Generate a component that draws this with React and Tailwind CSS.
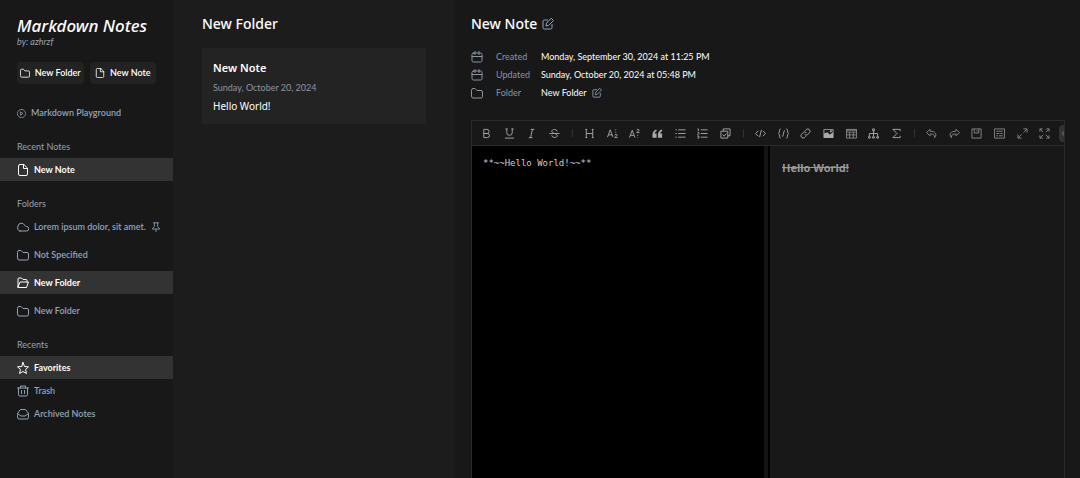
import React, { useState } from 'react';

const TOOLS = [
  { name: 'Bold', d: 'M6 3h7a4 4 0 0 1 0 9H6zM6 12h8a4 4 0 0 1 0 9H6z' },
  { name: 'Underline', d: 'M6 2v8a6 6 0 0 0 12 0V2M3 2h5M16 2h5M2 22h20' },
  { name: 'Italic', d: 'M10 3h8M6 21h8M14 3l-4 18' },
  { name: 'Strikethrough', d: 'M18 8c0-6-12-6-12-1 0 3 3 4 6 5s6 2 6 5c0 5-12 5-12-1M1 12h22' },
  null,
  { name: 'Title', d: 'M5 3v18M19 3v18M5 12h14M3 3h4M17 3h4M3 21h4M17 21h4' },
  { name: 'Subscript', d: 'M1 20 7 4l6 16M3 15h8M19 3v2M19 8v2M17 16c0-3 5-3 5 0l-5 5h6' },
  { name: 'Superscript', d: 'M1 21 7 5l6 16M3 16h8M17 5c0-3 5-3 5 0l-5 5h6M19 15v2M19 20v1' },
  { name: 'Quote', fill: true, d: 'M10 3C5 4 1 8 1 14v7h9v-9H6c0-3 2-4 4-5zM22 3c-5 1-9 5-9 11v7h9v-9h-4c0-3 2-4 4-5z' },
  { name: 'Unordered list', d: 'M7 4h16M7 12h16M7 20h16M1 4h3M1 12h3M1 20h3' },
  { name: 'Ordered list', d: 'M8 4h15M8 12h15M8 20h15M1 2h2v5M1 10h3v2l-3 3h3M1 18h3v4H1' },
  { name: 'Task list', d: 'M2 7h15v15H2zM7 7V2h15v15h-5M6 14l3 4 5-6' },
  null,
  { name: 'Inline code', d: 'M7 6l-6 6 6 6M17 6l6 6-6 6M14 4l-4 16' },
  { name: 'Block code', d: 'M6 2C1 2 5 9 2 11l-1 1 1 1c3 2-1 9 4 9M18 2c5 0 1 7 4 9l1 1-1 1c-3 2 1 9-4 9M14 5l-4 14' },
  { name: 'Link', d: 'M10 14a5 5 0 0 0 7 0l4-4a5 5 0 0 0-7-7l-3 3M14 10a5 5 0 0 0-7 0l-4 4a5 5 0 0 0 7 7l3-3' },
  { name: 'Image', fill: true, d: 'M3 2h18a2 2 0 0 1 2 2v16a2 2 0 0 1-2 2H3a2 2 0 0 1-2-2V4a2 2 0 0 1 2-2zM3 4v8l6-3 6 5 6-4V4zM15 5h4v4h-4z' },
  { name: 'Table', thin: true, d: 'M1 3h22v19H1zM1 5h22M1 9h22M1 15h22M8 9v13M16 9v13' },
  { name: 'Mermaid', d: 'M10 2h4v4h-4zM12 6v12M3 18v-6h18v6M1 19h4v3H1zM10 19h4v3h-4zM19 19h4v3h-4z' },
  { name: 'Formula', d: 'M20 7V3H4l9 9-9 9h16v-4' },
  null,
  { name: 'Undo', dim: true, d: 'M9 3 1 10l8 7v-4c7 0 10 2 10 8 6-8 1-14-10-14z' },
  { name: 'Redo', dim: true, d: 'M15 3l8 7-8 7v-4c-7 0-10 2-10 8C-1 13 4 7 15 7z' },
  { name: 'Save', dim: true, d: 'M2 2h20v20H2zM7 2v9h10V2M13 5v3' },
  { name: 'Prettier', dim: true, d: 'M1 2h22v20H1zM5 7h14M5 12h7M14 12h5M5 17h4M11 17h8' },
  { name: 'Fullscreen in page', dim: true, d: 'M14 2h8v8M22 2l-8 8M10 22H2v-8M2 22l8-8' },
  { name: 'Fullscreen', dim: true, d: 'M2 8V2h6M2 2l7 7M16 2h6v6M22 2l-7 7M2 16v6h6M2 22l7-7M22 16v6h-6M22 22l-7-7' },
  { name: 'Preview', dim: true, active: true, d: 'M1 12s4-8 11-8 11 8 11 8-4 8-11 8S1 12 1 12zM12 9a3 3 0 1 0 0 6 3 3 0 0 0 0-6z' },
];

const ICONS = {
  folder: 'M1 6a3 3 0 0 1 3-3h4l4 4h8a3 3 0 0 1 3 3v9a3 3 0 0 1-3 3H4a3 3 0 0 1-3-3z',
  folderOpen: 'M2 20V4a2 2 0 0 1 2-2h5l3 3h6a2 2 0 0 1 2 2v3M2 20l4-10h17l-4 11H3a1 1 0 0 1-1-1z',
  file: 'M13 1H6a3 3 0 0 0-3 3v16a3 3 0 0 0 3 3h12a3 3 0 0 0 3-3V9zM13 1v8h8',
  play: 'M12 1a11 11 0 1 0 0 22 11 11 0 0 0 0-22zM10 8l6 4-6 4z',
  cloud: 'M6 20h13a4.500 4.500 0 0 0 0-9c-2 0-3-1-4-3a7 7 0 0 0-13 2c-2 5 0 10 4 10z',
  pin: 'M6 2h12M8 2v9l-5 6h18l-5-6V2M12 17v6',
  star: 'M12 1l3 8 8 .6-6 5.400 2 8-7-4-7 4 2-8-6-5.400L9 9z',
  trash: 'M1 6h22M7 6V2h10v4M3 6v13a3 3 0 0 0 3 3h12a3 3 0 0 0 3-3V6M9 11v6M15 11v6',
  archive: 'M1 11l5-7a3 3 0 0 1 2-1h8a3 3 0 0 1 2 1l5 7v8a3 3 0 0 1-3 3H4a3 3 0 0 1-3-3zM1 11l7 5h8l7-5',
  calendar: 'M5 4h14a3 3 0 0 1 3 3v12a3 3 0 0 1-3 3H5a3 3 0 0 1-3-3V7a3 3 0 0 1 3-3zM2 11h20M8 1v6M16 1v6',
  edit: 'M11 4H5a3 3 0 0 0-3 3v12a3 3 0 0 0 3 3h12a3 3 0 0 0 3-3v-6M19 1l4 4-10 10-5 1 1-5z',
};

const FOLDERS = [
  { id: 1, title: 'Lorem ipsum dolor, sit amet.', icon: 'cloud', pinned: true },
  { id: 2, title: 'Not Specified', icon: 'folder' },
  { id: 3, title: 'New Folder', icon: 'folderOpen', active: true },
  { id: 4, title: 'New Folder', icon: 'folder' },
];

export default function App() {
  const [text, setText] = useState('**~~Hello World!~~**');

  return (
    <div className="flex h-screen overflow-hidden bg-[#181818] font-[Lato,sans-serif] text-[9px] leading-3 text-white">
      <Sidebar />
      <section className="w-[281px] shrink-0 bg-[#1c1c1c] pt-4 pr-7 pl-[29px]">
        <h2 className="font-['Noto_Sans',sans-serif] text-[14px] leading-4 font-medium">New Folder</h2>
        <a href="#note" className="mt-4 block bg-[#232323] px-[11px] pt-3 pb-3">
          <h3 className="font-['Noto_Sans',sans-serif] text-[11px] leading-4 font-semibold">New Note</h3>
          <p className="mt-[6px] text-[#8b95a3]">Sunday, October 20, 2024</p>
          <p className="mt-[6px] font-['Noto_Sans',sans-serif] text-[10px]">Hello World!</p>
        </a>
      </section>
      <main className="flex min-w-0 flex-1 flex-col pt-4 pr-[15px] pl-[17px]">
        <div className="flex items-center gap-[5px]">
          <h1 className="font-['Noto_Sans',sans-serif] text-[14px] leading-4 font-medium">New Note</h1>
          <button aria-label="Edit title" className="text-[#94a3b8]">
            <Icon name="edit" className="size-3" />
          </button>
        </div>
        <dl className="mt-[19px] space-y-[6px]">
          <Detail icon="calendar" label="Created">Monday, September 30, 2024 at 11:25 PM</Detail>
          <Detail icon="calendar" label="Updated">Sunday, October 20, 2024 at 05:48 PM</Detail>
          <Detail icon="folder" label="Folder">
            New Folder
            <button aria-label="Change folder" className="text-[#94a3b8]">
              <Icon name="edit" className="size-[10px]" />
            </button>
          </Detail>
        </dl>
        <div className="mt-[21px] flex min-h-0 flex-1 flex-col border-x border-t border-[#2b2b2b]">
          <Toolbar />
          <div className="flex min-h-0 flex-1">
            <textarea
              aria-label="Note content"
              value={text}
              onChange={e => setText(e.target.value)}
              spellCheck={false}
              className="min-w-0 flex-1 resize-none bg-black px-[11px] py-[11px] font-['DejaVu_Sans_Mono',monospace] text-[9px] leading-3 text-[#ccc] outline-none"
            />
            <div className="w-[6px] shrink-0 border-r-2 border-black bg-[#141414]" />
            <article className="min-w-0 flex-1 px-3 py-[15px] font-['Noto_Sans',sans-serif] text-[11px] leading-[14px] font-bold text-[#999]">
              <del>Hello World!</del>
            </article>
          </div>
        </div>
      </main>
    </div>
  );
}

function Sidebar() {
  return (
    <aside className="w-[173px] shrink-0 pt-4 font-semibold">
      <header className="px-[17px] pb-[5px]">
        <h1 className="font-['Noto_Sans',sans-serif] text-[17px] leading-5 font-medium italic">Markdown Notes</h1>
        <p className="font-normal text-[#94a3b8] italic">by: azhrzf</p>
        <div className="mt-[14px] flex gap-[6px]">
          <button className="flex h-[22px] flex-1 items-center justify-center gap-[5px] rounded bg-[#222] whitespace-nowrap">
            <Icon name="folder" className="size-[10px]" />
            New Folder
          </button>
          <button className="flex h-[22px] flex-1 items-center justify-center gap-[5px] rounded bg-[#222] whitespace-nowrap">
            <Icon name="file" className="size-[10px]" />
            New Note
          </button>
        </div>
        <a href="#playground" className="mt-[23px] flex items-center gap-[5px] text-[#94a3b8]">
          <Icon name="play" className="size-[9px]" />
          Markdown Playground
        </a>
      </header>
      <nav>
        <NavTitle>Recent Notes</NavTitle>
        <NavItem icon="file" active>New Note</NavItem>
        <NavTitle>Folders</NavTitle>
        <div className="space-y-[5px]">
          {FOLDERS.map(f => (
            <NavItem key={f.id} icon={f.icon} active={f.active}>
              {f.title}
              {f.pinned && <Icon name="pin" className="size-[10px]" />}
            </NavItem>
          ))}
        </div>
        <NavTitle>Recents</NavTitle>
        <NavItem icon="star" active>Favorites</NavItem>
        <NavItem icon="trash">Trash</NavItem>
        <NavItem icon="archive">Archived Notes</NavItem>
      </nav>
    </aside>
  );
}

function NavTitle({ children }) {
  return <h2 className="mt-[17px] mb-[5px] px-[17px] font-normal text-[#94a3b8]">{children}</h2>;
}

function NavItem({ icon, active, children }) {
  return (
    <a
      href="#item"
      className={`flex h-[23px] items-center gap-[5px] px-[17px] whitespace-nowrap ${active ? 'bg-[#333] font-bold text-white' : 'text-[#94a3b8]'}`}
    >
      <Icon name={icon} className="size-3" />
      {children}
    </a>
  );
}

function Detail({ icon, label, children }) {
  return (
    <div className="flex items-center">
      <dt className="flex w-[70px] items-center gap-[13px] text-[#8b95a3]">
        <Icon name={icon} className="size-3" />
        {label}
      </dt>
      <dd className="flex items-center gap-[5px]">{children}</dd>
    </div>
  );
}

function Toolbar() {
  return (
    <div className="shrink-0 overflow-hidden border-b border-[#2b2b2b]">
      <div className="-mr-[12px] flex h-6 items-center justify-between pl-[6px]">
        {TOOLS.map((t, i) =>
          t ? (
            <button
              key={t.name}
              title={t.name}
              className={`flex h-[17px] w-[17px] shrink-0 items-center justify-center rounded-sm ${t.dim ? 'text-[#888]' : 'text-[#aaa]'} ${t.active ? 'bg-[#333]' : ''}`}
            >
              <svg
                viewBox="0 0 24 24"
                className="size-[11px]"
                fill={t.fill ? 'currentColor' : 'none'}
                fillRule="evenodd"
                stroke={t.fill ? 'none' : 'currentColor'}
                strokeWidth={t.thin ? 1.5 : 2}
              >
                <path d={t.d} />
              </svg>
            </button>
          ) : (
            <span key={i} className="mx-[3px] h-2 w-px bg-[#333]" />
          )
        )}
      </div>
    </div>
  );
}

function Icon({ name, className }) {
  return (
    <svg
      className={`shrink-0 ${className}`}
      viewBox="0 0 24 24"
      fill="none"
      stroke="currentColor"
      strokeWidth={2}
      strokeLinecap="round"
      strokeLinejoin="round"
    >
      <path d={ICONS[name]} />
    </svg>
  );
}
